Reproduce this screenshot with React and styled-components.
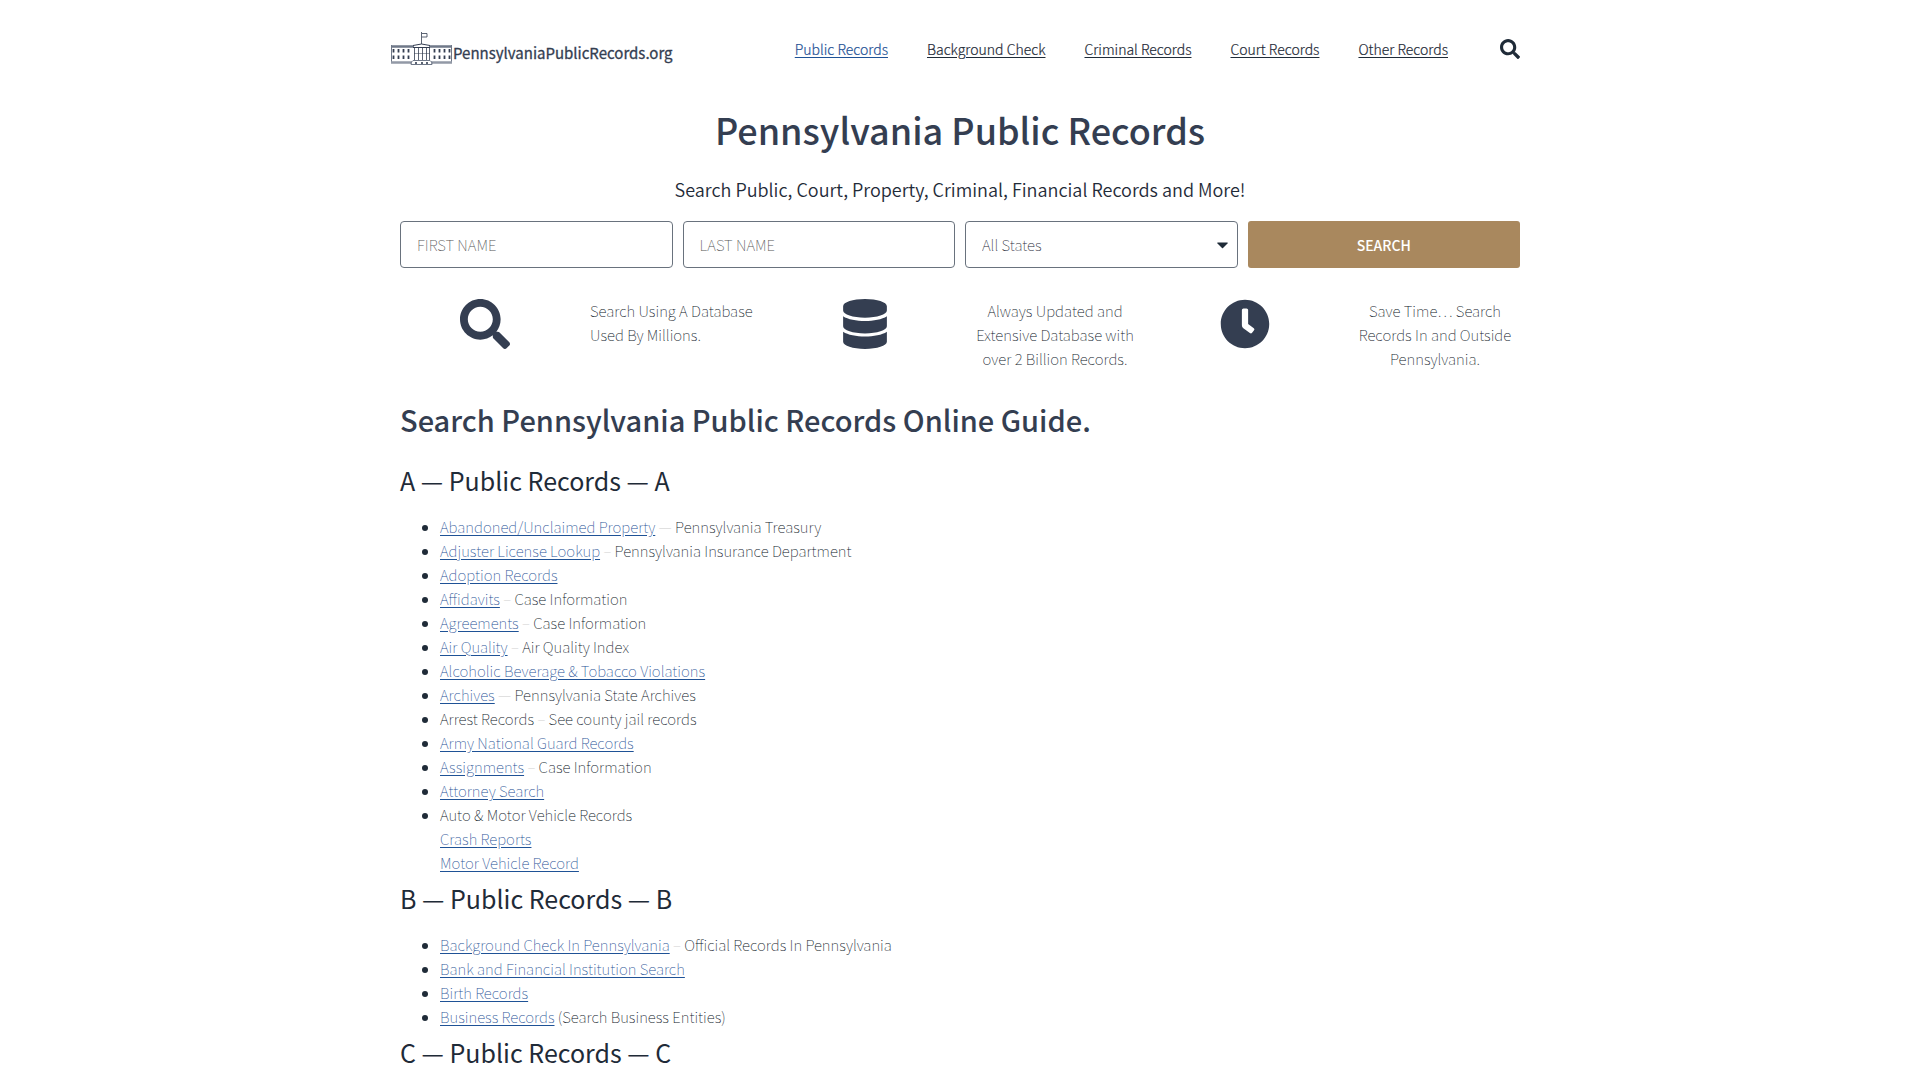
import React from "react";
import styled, { createGlobalStyle } from "styled-components";
import { FaSearch, FaDatabase, FaClock } from "react-icons/fa";

const ink = "#1f2b38";
const textInk = "#0c151e";
const navy = "#343e51";
const blue = "#1f5296";

const GlobalStyle = createGlobalStyle`
  *, *::before, *::after { box-sizing: border-box; }
  body {
    margin: 0;
    background: #fff;
    color: ${textInk};
    font-family: "Noto Sans CJK SC", "Open Sans", sans-serif;
    font-size: 15px;
    font-weight: 100;
    line-height: 24px;
  }
  h1, h2, h3, p, ul { margin: 0; padding: 0; }
  input, select, button { font: inherit; }
`;

const Container = styled.div`
  width: 100%;
  max-width: 1140px;
  margin: 0 auto;
`;

const Header = styled.header`
  display: flex;
  align-items: center;
  justify-content: space-between;
  height: 98px;
  padding-right: 10px;
`;

const Logo = styled.a`
  display: flex;
  align-items: center;
  color: ${navy};
  text-decoration: none;
`;

const LogoText = styled.span`
  padding-top: 8px;
  font-size: 15px;
  font-weight: 400;
  -webkit-text-stroke: 0.3px ${navy};
`;

const Nav = styled.nav`
  display: flex;
  align-items: center;
  gap: 39px;
`;

const NavLink = styled.a`
  color: ${(p) => (p.$active ? blue : ink)};
  font-size: 14px;
  font-weight: 300;
  text-underline-offset: 2px;
  -webkit-text-stroke: 0.2px currentColor;
`;

const IconButton = styled.button`
  display: flex;
  margin-left: 13px;
  padding: 0;
  border: 0;
  background: none;
  color: ${ink};
  font-size: 20px;
`;

const Main = styled.main`
  padding: 0 10px;
`;

const Title = styled.h1`
  padding-top: 6px;
  color: ${navy};
  font-size: 36px;
  font-weight: 500;
  line-height: 50px;
  text-align: center;
`;

const Subtitle = styled.p`
  padding: 21px 0 18px;
  color: ${ink};
  font-size: 18px;
  font-weight: 350;
  line-height: 28px;
  text-align: center;
`;

const SearchForm = styled.form`
  display: grid;
  grid-template-columns: repeat(4, 1fr);
  gap: 10px;
`;

const Field = styled.div`
  position: relative;
  display: grid;
`;

const TextInput = styled.input`
  width: 100%;
  height: 47px;
  padding: 0 16px;
  border: 1px solid #69727d;
  border-radius: 4px;
  background: #fff;
  color: ${ink};
  &::placeholder { color: #555; opacity: 1; }
`;

const Select = styled.select`
  width: 100%;
  height: 47px;
  padding: 0 40px 0 16px;
  border: 1px solid #69727d;
  border-radius: 4px;
  background: #fff;
  color: ${ink};
  appearance: none;
`;

const Caret = styled.svg`
  position: absolute;
  top: 21px;
  right: 10px;
  pointer-events: none;
`;

const Submit = styled.button`
  height: 47px;
  border: 0;
  border-radius: 3px;
  background: #a9885e;
  color: #fff;
  font-size: 14px;
  font-weight: 500;
`;

const Features = styled.section`
  display: grid;
  grid-template-columns: repeat(6, 1fr);
  gap: 20px;
  padding: 31px 0 28px;
`;

const FeatureIcon = styled.div`
  display: flex;
  justify-content: center;
  color: ${navy};
  font-size: 50px;
`;

const FeatureText = styled.p`
  text-align: ${(p) => (p.$left ? "left" : "center")};
`;

const GuideTitle = styled.h2`
  padding-bottom: 18px;
  color: ${navy};
  font-size: 29px;
  font-weight: 500;
  line-height: 40px;
`;

const GroupTitle = styled.h3`
  color: ${ink};
  font-size: 25px;
  font-weight: 400;
  line-height: 46px;
`;

const List = styled.ul`
  padding: 12px 0 0 40px;
  li::marker { color: ${ink}; }
`;

const RecordLink = styled.a`
  color: ${blue};
  text-underline-offset: 2px;
`;

const Dash = styled.span`
  color: #ccc;
`;

function Building() {
  const wing = [394, 399, 404, 409];
  const east = [435, 440, 445, 450];
  return (
    <svg width="63" height="34" viewBox="390 31 63 34" fill="none" stroke={navy} aria-hidden="true">
      <path d="M421.5 31v12M422 32.5h5v3.5h-5" strokeWidth="0.8" />
      <path d="M391 45.5h23M429 45.5h23" stroke="#6f7888" strokeWidth="2.5" />
      <path d="M391.5 44v18M451.5 44v18" stroke="#6f7888" />
      <path d="M391 61.5h21M431 61.5h21" stroke="#9299a6" strokeWidth="2.4" />
      <path d="M413 44.5q8.500-3 17 0M413 46.500h17" />
      <path d="M414.500 46v13M418.500 46v13M422.500 46v13M426.500 46v13M429.500 46v13" strokeWidth="0.8" />
      <path d="M414 52.500h16" strokeWidth="0.5" />
      <path d="M413 59.500h17l2 2v2h-21v-2z" stroke="#6f7888" />
      <path d="M416 63v-2M422 63v-2M427 63v-2" strokeWidth="1.600" />
      {[...wing, ...east].map((x) => (
        <path key={x} d={`M${x - 0.5} 48v3.500M${x - 0.5} 54.500v3.500`} strokeWidth="1.800" />
      ))}
    </svg>
  );
}

const navItems = ["Public Records", "Background Check", "Criminal Records", "Court Records", "Other Records"];

const features = [
  { icon: FaSearch, text: "Search Using A Database Used By Millions.", left: true },
  { icon: FaDatabase, text: "Always Updated and Extensive Database with over 2 Billion Records." },
  { icon: FaClock, text: "Save Time… Search Records In and Outside Pennsylvania." },
];

const groups = [
  {
    letter: "A",
    items: [
      { link: "Abandoned/Unclaimed Property", dash: "—", note: "Pennsylvania Treasury" },
      { link: "Adjuster License Lookup", dash: "–", note: "Pennsylvania Insurance Department" },
      { link: "Adoption Records" },
      { link: "Affidavits", dash: "–", note: "Case Information" },
      { link: "Agreements", dash: "–", note: "Case Information" },
      { link: "Air Quality", dash: "–", note: "Air Quality Index" },
      { link: "Alcoholic Beverage & Tobacco Violations" },
      { link: "Archives", dash: "—", note: "Pennsylvania State Archives" },
      { text: "Arrest Records", dash: "–", note: "See county jail records" },
      { link: "Army National Guard Records" },
      { link: "Assignments", dash: "–", note: "Case Information" },
      { link: "Attorney Search" },
      { text: "Auto & Motor Vehicle Records", sub: ["Crash Reports", "Motor Vehicle Record"] },
    ],
  },
  {
    letter: "B",
    items: [
      { link: "Background Check In Pennsylvania", dash: "–", note: "Official Records In Pennsylvania" },
      { link: "Bank and Financial Institution Search" },
      { link: "Birth Records" },
      { link: "Business Records", note: "(Search Business Entities)" },
    ],
  },
  { letter: "C", items: [] },
];

function RecordItem({ link, text, dash, note, sub = [] }) {
  return (
    <li>
      {link ? <RecordLink href="#">{link}</RecordLink> : text}
      {dash && <Dash> {dash}</Dash>}
      {note && ` ${note}`}
      {sub.map((s) => (
        <div key={s}>
          <RecordLink href="#">{s}</RecordLink>
        </div>
      ))}
    </li>
  );
}

export default function App() {
  return (
    <>
      <GlobalStyle />
      <Container>
        <Header>
          <Logo href="#">
            <Building />
            <LogoText>PennsylvaniaPublicRecords.org</LogoText>
          </Logo>
          <Nav>
            {navItems.map((item, i) => (
              <NavLink key={item} href="#" $active={i === 0}>{item}</NavLink>
            ))}
            <IconButton type="button" aria-label="Search"><FaSearch /></IconButton>
          </Nav>
        </Header>
        <Main>
          <Title>Pennsylvania Public Records</Title>
          <Subtitle>Search Public, Court, Property, Criminal, Financial Records and More!</Subtitle>
          <SearchForm>
            <Field>
              <TextInput aria-label="First name" placeholder="FIRST NAME" />
            </Field>
            <Field>
              <TextInput aria-label="Last name" placeholder="LAST NAME" />
            </Field>
            <Field>
              <Select aria-label="State"><option>All States</option></Select>
              <Caret width="11" height="7" viewBox="0 0 11 7" aria-hidden="true">
                <path d="M0.500 0.500h10q0.500 0.500 0 1l-4.500 4.500q-0.500 0.500-1 0l-4.500-4.500q-0.500-0.500 0-1z" fill={ink} />
              </Caret>
            </Field>
            <Submit type="button">SEARCH</Submit>
          </SearchForm>
          <Features>
            {features.map(({ icon: Icon, text, left }) => (
              <React.Fragment key={text}>
                <FeatureIcon><Icon /></FeatureIcon>
                <FeatureText $left={left}>{text}</FeatureText>
              </React.Fragment>
            ))}
          </Features>
          <GuideTitle>Search Pennsylvania Public Records Online Guide.</GuideTitle>
          {groups.map(({ letter, items }) => (
            <section key={letter}>
              <GroupTitle>{letter} — Public Records — {letter}</GroupTitle>
              {items.length > 0 && (
                <List>
                  {items.map((item) => (
                    <RecordItem key={item.link || item.text} {...item} />
                  ))}
                </List>
              )}
            </section>
          ))}
        </Main>
      </Container>
    </>
  );
}
